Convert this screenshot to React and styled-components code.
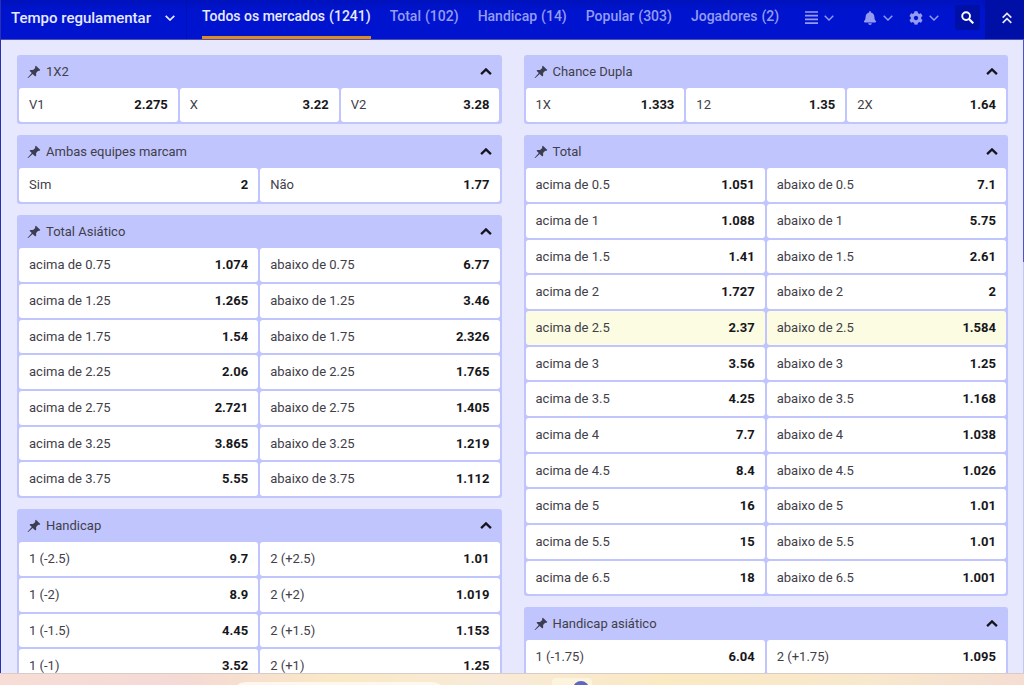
import React from 'react';
import styled, { createGlobalStyle, css } from 'styled-components';
import { FaBell, FaCog } from 'react-icons/fa';

const GlobalStyle = createGlobalStyle`
  *, *::before, *::after {
    box-sizing: border-box;
  }
  body {
    margin: 0;
    font-family: Roboto, 'Liberation Sans', sans-serif;
    font-size: 13px;
    color: #3f4049;
    background: #e7e7fe;
  }
  button {
    font: inherit;
    color: inherit;
    background: none;
    border: none;
    padding: 0;
    cursor: pointer;
  }
`;

const Page = styled.div`
  display: flex;
  flex-direction: column;
  height: 100vh;
  overflow: hidden;
`;

const Window = styled.div`
  display: flex;
  flex-direction: column;
  flex: 1;
  min-height: 0;
  border-left: 1px solid #2a30b0;
`;

const TopBar = styled.header`
  display: flex;
  flex: none;
  height: 40px;
  color: #fff;
  background: linear-gradient(#0012bc, #0014d0 12px);
  border-bottom: 1px solid #4a50bc;
`;

const Period = styled.button`
  display: flex;
  flex: none;
  align-items: center;
  justify-content: space-between;
  width: 186px;
  padding: 0 11px 4px 10px;
  border-right: 1px solid #0011b4;
  font-size: 15px;
  font-weight: 500;
  color: #e8e9fd;
`;

const Tabs = styled.nav`
  display: flex;
  flex: 1;
  gap: 19px;
  min-width: 0;
  padding-left: 15px;
  overflow: hidden;
`;

const Tab = styled.a`
  display: flex;
  flex: none;
  gap: 4px;
  height: 39px;
  padding-top: 8px;
  font-size: 14px;
  line-height: 16px;
  font-weight: 500;
  white-space: nowrap;
  text-decoration: none;
  color: #959cf0;
  border-bottom: 3px solid transparent;

  ${(props) =>
    props.$active &&
    css`
      color: #e8e9fd;
      border-bottom-color: #e08c1c;
    `}
`;

const Tools = styled.div`
  display: flex;
  flex: none;
  align-items: center;
  gap: 16px;
  padding: 0 5px 4px 0;
  color: #959cf0;
`;

const Tool = styled.button`
  display: flex;
  align-items: center;
  gap: 6px;
  margin-right: ${(props) => (props.$spaced ? '13px' : '0')};
`;

const SearchButton = styled.button`
  display: grid;
  place-items: center;
  width: 25px;
  height: 25px;
  border-radius: 3px;
  background: #000fa6;
  color: #fff;
`;

const CollapseAll = styled.button`
  display: grid;
  flex: none;
  place-items: center;
  width: 39px;
  padding: 0 0 4px 4px;
  background: #000fa6;
  color: #e8e9fd;
`;

const Content = styled.div`
  display: flex;
  flex: 1;
  min-height: 0;
`;

const Board = styled.main`
  display: grid;
  grid-template-columns: repeat(2, minmax(0, 1fr));
  align-items: start;
  gap: 22px;
  flex: 1;
  padding: 15px 15px 0 16px;
  overflow: hidden;
`;

const Track = styled.div`
  width: 1px;
  background: #c1c5fe;
`;

const Thumb = styled.div`
  height: 35%;
  background: #4a52d8;
`;

const Column = styled.div`
  display: flex;
  flex-direction: column;
  gap: 11px;
`;

const Panel = styled.section`
  padding: 0 2px 2px;
  border-radius: 3px;
  background: #c1c5fe;
`;

const PanelHeader = styled.header`
  display: flex;
  align-items: center;
  height: 33px;
  padding: 0 8px;
`;

const PanelTitle = styled.h2`
  flex: 1;
  margin: 0 0 0 5px;
  font-size: 13px;
  line-height: 16px;
  font-weight: 400;
`;

const IconButton = styled.button`
  display: flex;
  color: ${(props) => (props.$dark ? '#15151c' : '#3b3d50')};
`;

const Odds = styled.div`
  display: grid;
  grid-template-columns: repeat(${(props) => props.$columns}, minmax(0, 1fr));
  grid-auto-rows: 34px 34px 33px;
  gap: 2px;
`;

const Outcome = styled.button`
  display: flex;
  align-items: center;
  justify-content: space-between;
  padding: 0 10px;
  border-radius: 3px;
  line-height: 16px;
  background: ${(props) => (props.$marked ? '#fcfce2' : '#fff')};
`;

const Price = styled.strong`
  font-weight: 700;
  color: #17171b;
`;

const TaskBar = styled.footer`
  display: flex;
  flex: none;
  align-items: flex-start;
  height: 12px;
  overflow: hidden;
  border-top: 1px solid #d9ccc6;
  background: linear-gradient(
    90deg,
    #f8dcd6,
    #f5d9d4 18%,
    #fae9c6 33%,
    #f8ead8 48%,
    #fbe9c2 65%,
    #f8e8cc 85%,
    #f5ddd2
  );
`;

const TaskSearch = styled.div`
  flex: none;
  width: 216px;
  height: 30px;
  margin: 8px 0 0 231px;
  border-radius: 15px;
  background: #fdf7ee;
`;

const TaskApp = styled.div`
  display: grid;
  flex: none;
  justify-content: end;
  width: 40px;
  height: 38px;
  margin: 4px 0 0 105px;
  padding: 3px 3px 0;
  border-radius: 4px;
  background: #fdf4de;
`;

const TaskDot = styled.span`
  width: 16px;
  height: 16px;
  border-radius: 50%;
  background: #5c66c4;
`;

const Chevron = ({ up, width = 10, stroke = 2 }) => (
  <svg width={width} height={up ? 7 : 6} viewBox="0 0 10 6" fill="none" aria-hidden="true">
    <path
      d={up ? 'M0.8 5.2 5 1.2 9.2 5.2' : 'M0.7 0.8 5 5 9.3 0.8'}
      stroke="currentColor"
      strokeWidth={stroke}
    />
  </svg>
);

const PinIcon = () => (
  <svg width="14" height="14" viewBox="0 0 14 14" fill="currentColor" aria-hidden="true">
    <path d="M8.9 0.7 13.3 5.1 12.2 5.9 11.2 5.7 9.1 8 9.2 10.6 8.3 11.5 5.7 8.9 1.2 12.9 0.6 13.1 0.8 12.5 4.8 8 2.5 5.7 3.4 4.9 6 5 8.3 2.9 8 1.7Z" />
  </svg>
);

const ListIcon = () => (
  <svg width="13" height="13" viewBox="0 0 13 13" aria-hidden="true">
    <path d="M0 1H13M0 4.7H13M0 8.4H13M0 12.1H13" stroke="currentColor" strokeWidth="1.7" />
  </svg>
);

const SearchIcon = () => (
  <svg width="13" height="13" viewBox="0 0 13 13" fill="none" stroke="currentColor" aria-hidden="true">
    <circle cx="5.1" cy="5.1" r="3.9" strokeWidth="1.9" />
    <path d="M8 8 12.3 12.3" strokeWidth="2.2" />
  </svg>
);

const DoubleChevronUp = () => (
  <svg width="10" height="12" viewBox="0 0 10 12" fill="none" aria-hidden="true">
    <path d="M0.7 5.6 5 1.4 9.3 5.6M0.7 10.8 5 6.6 9.3 10.8" stroke="currentColor" strokeWidth="1.7" />
  </svg>
);

const tabs = [
  { name: 'Todos os mercados', count: 1241, active: true },
  { name: 'Total', count: 102 },
  { name: 'Handicap', count: 14 },
  { name: 'Popular', count: 303 },
  { name: 'Jogadores', count: 2 },
];

// builds the "acima / abaixo" pairs of a totals market
const totals = (rows) =>
  rows.flatMap(([line, over, under]) => [
    [`acima de ${line}`, over],
    [`abaixo de ${line}`, under],
  ]);

const leftMarkets = [
  {
    title: '1X2',
    columns: 3,
    outcomes: [['V1', '2.275'], ['X', '3.22'], ['V2', '3.28']],
  },
  {
    title: 'Ambas equipes marcam',
    outcomes: [['Sim', '2'], ['Não', '1.77']],
  },
  {
    title: 'Total Asiático',
    outcomes: totals([
      ['0.75', '1.074', '6.77'],
      ['1.25', '1.265', '3.46'],
      ['1.75', '1.54', '2.326'],
      ['2.25', '2.06', '1.765'],
      ['2.75', '2.721', '1.405'],
      ['3.25', '3.865', '1.219'],
      ['3.75', '5.55', '1.112'],
    ]),
  },
  {
    title: 'Handicap',
    outcomes: [
      ['1 (-2.5)', '9.7'],
      ['2 (+2.5)', '1.01'],
      ['1 (-2)', '8.9'],
      ['2 (+2)', '1.019'],
      ['1 (-1.5)', '4.45'],
      ['2 (+1.5)', '1.153'],
      ['1 (-1)', '3.52'],
      ['2 (+1)', '1.25'],
    ],
  },
];

const rightMarkets = [
  {
    title: 'Chance Dupla',
    columns: 3,
    outcomes: [['1X', '1.333'], ['12', '1.35'], ['2X', '1.64']],
  },
  {
    title: 'Total',
    marked: '2.5',
    outcomes: totals([
      ['0.5', '1.051', '7.1'],
      ['1', '1.088', '5.75'],
      ['1.5', '1.41', '2.61'],
      ['2', '1.727', '2'],
      ['2.5', '2.37', '1.584'],
      ['3', '3.56', '1.25'],
      ['3.5', '4.25', '1.168'],
      ['4', '7.7', '1.038'],
      ['4.5', '8.4', '1.026'],
      ['5', '16', '1.01'],
      ['5.5', '15', '1.01'],
      ['6.5', '18', '1.001'],
    ]),
  },
  {
    title: 'Handicap asiático',
    outcomes: [['1 (-1.75)', '6.04'], ['2 (+1.75)', '1.095']],
  },
];

const Market = ({ title, columns = 2, outcomes, marked }) => (
  <Panel>
    <PanelHeader>
      <IconButton type="button" aria-label={`Fixar ${title}`}>
        <PinIcon />
      </IconButton>
      <PanelTitle>{title}</PanelTitle>
      <IconButton type="button" $dark aria-label={`Recolher ${title}`}>
        <Chevron up width={12} />
      </IconButton>
    </PanelHeader>
    <Odds $columns={columns}>
      {outcomes.map(([name, price]) => (
        <Outcome
          key={name}
          type="button"
          $marked={Boolean(marked) && name.endsWith(` ${marked}`)}
        >
          <span>{name}</span>
          <Price>{price}</Price>
        </Outcome>
      ))}
    </Odds>
  </Panel>
);

export default function App() {
  return (
    <Page>
      <GlobalStyle />
      <Window>
        <TopBar>
          <Period type="button">
            <span>Tempo regulamentar</span>
            <Chevron stroke={1.7} />
          </Period>
          <Tabs>
            {tabs.map((tab) => (
              <Tab key={tab.name} href="#" $active={tab.active}>
                <span>{tab.name}</span>
                <span>({tab.count})</span>
              </Tab>
            ))}
          </Tabs>
          <Tools>
            <Tool type="button" $spaced aria-label="Colunas">
              <ListIcon />
              <Chevron stroke={1.4} />
            </Tool>
            <Tool type="button" aria-label="Alertas">
              <FaBell size={14} />
              <Chevron stroke={1.4} />
            </Tool>
            <Tool type="button" aria-label="Ajustes">
              <FaCog size={14} />
              <Chevron stroke={1.4} />
            </Tool>
            <SearchButton type="button" aria-label="Buscar">
              <SearchIcon />
            </SearchButton>
          </Tools>
          <CollapseAll type="button" aria-label="Recolher tudo">
            <DoubleChevronUp />
          </CollapseAll>
        </TopBar>
        <Content>
          <Board>
            <Column>
              {leftMarkets.map((market) => (
                <Market key={market.title} {...market} />
              ))}
            </Column>
            <Column>
              {rightMarkets.map((market) => (
                <Market key={market.title} {...market} />
              ))}
            </Column>
          </Board>
          <Track>
            <Thumb />
          </Track>
        </Content>
      </Window>
      <TaskBar>
        <TaskSearch />
        <TaskApp>
          <TaskDot />
        </TaskApp>
      </TaskBar>
    </Page>
  );
}
